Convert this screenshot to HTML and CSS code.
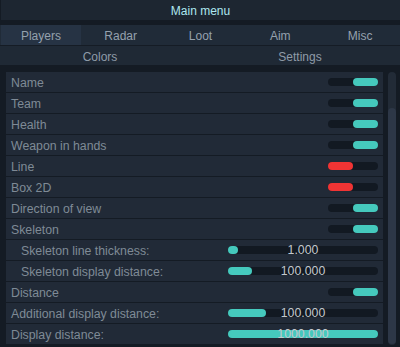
FILE: index.html
```html
<!DOCTYPE html>
<html>
<head>
<meta charset="utf-8">
<link rel="stylesheet" href="styles.css">
</head>
<body>
<div class="window">
  <div class="title">Main menu</div>
  <div class="tabs">
    <div class="tab active">Players</div>
    <div class="tab">Radar</div>
    <div class="tab">Loot</div>
    <div class="tab">Aim</div>
    <div class="tab">Misc</div>
  </div>
  <div class="subtabs">
    <div class="tab">Colors</div>
    <div class="tab">Settings</div>
  </div>
  <div class="content">
    <div class="list">
      <div class="row"><span class="label">Name</span><span class="toggle on"><i></i></span></div>
      <div class="row"><span class="label">Team</span><span class="toggle on"><i></i></span></div>
      <div class="row"><span class="label">Health</span><span class="toggle on"><i></i></span></div>
      <div class="row"><span class="label">Weapon in hands</span><span class="toggle on"><i></i></span></div>
      <div class="row"><span class="label">Line</span><span class="toggle off"><i></i></span></div>
      <div class="row"><span class="label">Box 2D</span><span class="toggle off"><i></i></span></div>
      <div class="row"><span class="label">Direction of view</span><span class="toggle on"><i></i></span></div>
      <div class="row"><span class="label">Skeleton</span><span class="toggle on"><i></i></span></div>
      <div class="row sub"><span class="label">Skeleton line thickness:</span><span class="slider"><i style="width:10px"></i><b>1.000</b></span></div>
      <div class="row sub"><span class="label">Skeleton display distance:</span><span class="slider"><i style="width:24px"></i><b>100.000</b></span></div>
      <div class="row"><span class="label">Distance</span><span class="toggle on"><i></i></span></div>
      <div class="row"><span class="label">Additional display distance:</span><span class="slider"><i style="width:38px"></i><b>100.000</b></span></div>
      <div class="row"><span class="label">Display distance:</span><span class="slider"><i style="width:150px"></i><b>1000.000</b></span></div>
    </div>
    <div class="scrollbar"><div class="thumb"></div></div>
  </div>
</div>
</body>
</html>
```
FILE: styles.css
```css
* { box-sizing: border-box; }
html, body { margin: 0; padding: 0; }
body {
  width: 400px;
  height: 347px;
  overflow: hidden;
  background: #141b24;
  font-family: "Liberation Sans", Arial, sans-serif;
  font-size: 12px;
}
.window {
  width: 400px;
  height: 347px;
  background: #141b24;
}
.title {
  height: 20px;
  line-height: 22px;
  text-align: center;
  color: #ade6ef;
  background: #1d2631;
  margin-left: 1px;
}
.tabs {
  display: flex;
  height: 20px;
  margin-top: 5px;
  background: #202b38;
  border-bottom: 1px solid #151c25;
  box-sizing: content-box;
}
.tab {
  flex: 1;
  text-align: center;
  line-height: 22px;
  height: 20px;
  color: #95a1ae;
}
.tab.active {
  background: #263344;
  margin-left: 1px;
}
.subtabs {
  display: flex;
  height: 19px;
  background: #1f2935;
}
.subtabs .tab { line-height: 22px; height: 19px; color: #8f9ba8; }
.content {
  display: flex;
  margin-top: 7px;
  padding-left: 6px;
  gap: 5px;
}
.list {
  width: 377px;
  display: flex;
  flex-direction: column;
  gap: 1px;
}
.row {
  height: 20px;
  background: #212a37;
  display: flex;
  align-items: center;
  justify-content: space-between;
  padding: 0 5px;
}
.label {
  color: #7f8a96;
  font-size: 12.3px;
  line-height: 20px;
  padding-top: 1px;
}
.row.sub .label { padding-left: 10px; }
.toggle {
  width: 50px;
  height: 8px;
  border-radius: 4px;
  background: #121922;
  display: flex;
}
.toggle i {
  width: 25px;
  height: 8px;
  border-radius: 4px;
}
.toggle.on { justify-content: flex-end; }
.toggle.on i { background: #45c9bd; }
.toggle.off i { background: #f03434; }
.slider {
  position: relative;
  width: 150px;
  height: 8px;
  border-radius: 4px;
  background: #121922;
}
.slider i {
  position: absolute;
  left: 0;
  top: 0;
  height: 8px;
  border-radius: 4px;
  background: #45c9bd;
}
.slider b {
  position: absolute;
  left: 0;
  right: 0;
  top: -6px;
  line-height: 20px;
  text-align: center;
  font-weight: normal;
  font-size: 12.3px;
  color: #c3c8cd;
}
.scrollbar {
  width: 8px;
  height: 273px;
  border-radius: 4px;
  background: #222b37;
  padding-top: 36px;
}
.thumb {
  height: 236px;
  border-radius: 4px;
  background: #2d3747;
}
```
